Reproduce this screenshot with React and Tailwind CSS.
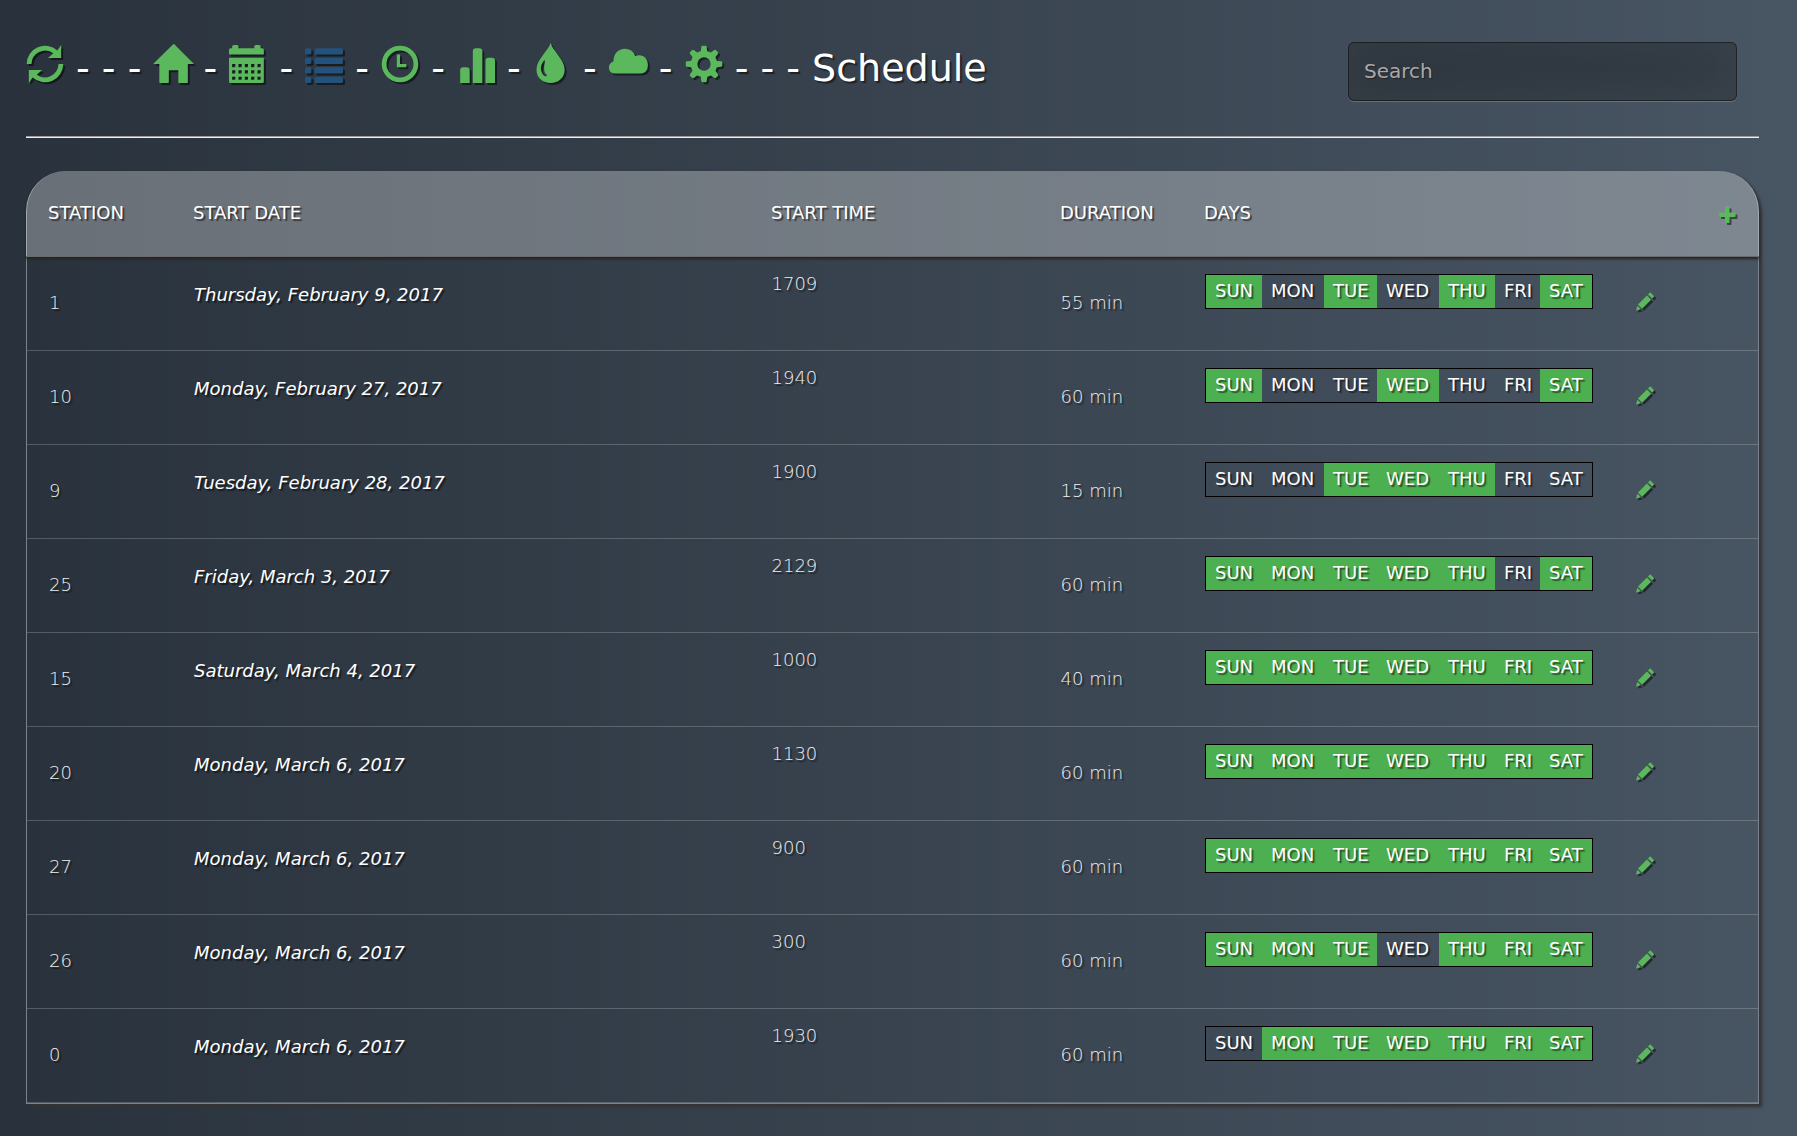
const cogTeeth = [0, 45, 90, 135, 180, 225, 270, 315];

const listRow = (y) => (
  <g key={y}>
    <rect x="0" y={y} width="200" height="200" rx="50" />
    <rect x="300" y={y} width="900" height="200" rx="50" />
  </g>
);

const holes = [];
for (const x of [100, 300, 500, 700, 900])
  for (const y of [500, 300, 100]) holes.push(`M${x} ${y}h100v100h-100z`);

const glyphs = {
  refresh: (
    <>
      <path d="M23 600A577 577 0 0 0 990 1025L1110 1200V790H695L860 940A435 435 0 0 1 173 600z" />
      <path d="M1177 600A577 577 0 0 0 210 175L90 0V410H505L340 260A435 435 0 0 1 1027 600z" />
    </>
  ),
  home: (
    <path d="M18 618l620 608q8 7 18.500 7t17.500 -7l608 -608q8 -8 5.500 -13t-12.500 -5h-175v-575q0 -10 -7.500 -17.500t-17.500 -7.500h-250q-10 0 -17.500 7.500t-7.500 17.500v375h-300v-375q0 -10 -7.500 -17.500t-17.500 -7.500h-250q-10 0 -17.500 7.500t-7.500 17.500v575h-175q-10 0 -12.500 5t5.500 13z" />
  ),
  calendar: (
    <>
      <path d="M0 900V1050Q0 1100 50 1100H100V1150Q100 1200 150 1200H250Q300 1200 300 1150V1100H800V1150Q800 1200 850 1200H950Q1000 1200 1000 1150V1100H1050Q1100 1100 1100 1050V900z" />
      <path fillRule="evenodd" d={"M0 800H1100V50Q1100 0 1050 0H50Q0 0 0 50z" + holes.join("")} />
    </>
  ),
  list: <>{[0, 300, 600, 900].map(listRow)}</>,
  clock: (
    <path fillRule="evenodd" d="M600 1177A577 577 0 1 0 600 23A577 577 0 1 0 600 1177zM600 1027A427 427 0 1 1 600 173A427 427 0 1 1 600 1027zM500 900h100v-300h200v-100h-300z" />
  ),
  stats: (
    <>
      <path d="M100 0V400Q100 500 200 500H300Q400 500 400 400V0z" />
      <path d="M500 0V1000Q500 1100 600 1100H700Q800 1100 800 1000V0z" />
      <path d="M900 0V700Q900 800 1000 800H1100Q1200 800 1200 700V0z" />
    </>
  ),
  tint: (
    <path fillRule="evenodd" d="M555 1275C590 1050 1000 760 1000 420C1000 170 800 0 555 0C305 0 110 170 110 420C110 760 515 1050 555 1275zM367 725C310 670 255 580 250 470C250 350 320 225 390 210C440 205 455 245 425 270C370 300 350 370 350 470C350 570 385 650 367 725z" />
  ),
  cloud: (
    <path d="M200 300H1000Q1100 300 1160 360Q1230 440 1230 580Q1230 690 1160 780Q1080 875 950 875Q890 875 830 845Q780 980 700 1030Q610 1085 500 1085Q350 1085 240 970Q140 860 145 690Q-10 610 -5 490Q0 300 200 300z" />
  ),
  cog: (
    <>
      <path fillRule="evenodd" d="M600 1015A415 415 0 1 0 600 185A415 415 0 1 0 600 1015zM600 810A210 210 0 1 1 600 390A210 210 0 1 1 600 810z" />
      {cogTeeth.map((a) => (
        <path key={a} transform={`rotate(${a} 600 600)`} d="M470 950Q510 1010 515 1140Q518 1175 550 1177H650Q682 1175 685 1140Q690 1010 730 950z" />
      ))}
    </>
  ),
  plus: (
    <path d="M450 1100H650Q700 1100 700 1050V700H1050Q1100 700 1100 650V450Q1100 400 1050 400H700V50Q700 0 650 0H450Q400 0 400 50V400H50Q0 400 0 450V650Q0 700 50 700H400V1050Q400 1100 450 1100z" />
  ),
  pencil: (
    <path d="M0 -30L90 290L330 50zM130 370L410 90L1010 690L730 970zM800 1035L1075 760L1185 870Q1220 905 1185 945L985 1145Q945 1180 910 1145z" />
  ),
};

function Glyph({ name, className }) {
  return (
    <svg viewBox="0 0 1200 1200" className={"shrink-0 overflow-visible drop-shadow-[2px_2px_0.6px_rgba(0,0,0,0.5)] " + className} fill="currentColor" aria-hidden="true">
      <g transform="matrix(1 0 0 -1 0 1200)">{glyphs[name]}</g>
    </svg>
  );
}

const nav = ["home", "calendar", "list", "clock", "stats", "tint", "cloud", "cog"];

const dayWidths = [
  ["SUN", "w-[56px]"],
  ["MON", "w-[62px]"],
  ["TUE", "w-[53px]"],
  ["WED", "w-[62px]"],
  ["THU", "w-[56px]"],
  ["FRI", "w-[45px]"],
  ["SAT", "w-[52px]"],
];

const rows = [
  ["1", "Thursday, February 9, 2017", "1709", "55 min", "1010101"],
  ["10", "Monday, February 27, 2017", "1940", "60 min", "1001001"],
  ["9", "Tuesday, February 28, 2017", "1900", "15 min", "0011100"],
  ["25", "Friday, March 3, 2017", "2129", "60 min", "1111101"],
  ["15", "Saturday, March 4, 2017", "1000", "40 min", "1111111"],
  ["20", "Monday, March 6, 2017", "1130", "60 min", "1111111"],
  ["27", "Monday, March 6, 2017", "900", "60 min", "1111111"],
  ["26", "Monday, March 6, 2017", "300", "60 min", "1110111"],
  ["0", "Monday, March 6, 2017", "1930", "60 min", "0111111"],
];

const light = "font-extralight text-[#eee]";

export default function App() {
  return (
    <div className="h-[1136px] w-[1797px] overflow-hidden bg-linear-to-r from-[#29323c] to-[#485563] pl-[26px] pr-[38px] font-['DejaVu_Sans',sans-serif] text-[18px] text-white [text-shadow:2px_2px_1px_rgba(0,0,0,0.5)]">
      <header className="flex h-[136px] items-start justify-between">
        <h1 className="mt-[45px] flex whitespace-pre text-[38px] leading-[46px]">
          <Glyph name="refresh" className="size-[38px] text-[#5cb85c]" />
          <span>{" - - - "}</span>
          {nav.map((n, i) => (
            <span key={n} className="flex">
              {i > 0 && <span>{" - "}</span>}
              <Glyph name={n} className={"size-[38px] " + (n === "list" ? "text-[#23527c]" : "text-[#5cb85c]")} />
            </span>
          ))}
          <span>{" - - - Schedule"}</span>
        </h1>
        <input
          placeholder="Search"
          className="mr-[22px] mt-[42px] h-[59px] w-[389px] rounded-[6px] border border-black/40 bg-black/30 px-[15px] pb-[2px] text-[20px] shadow-[inset_0_-5px_45px_rgba(100,100,100,0.2),0_1px_1px_rgba(255,255,255,0.2)] outline-none placeholder:text-[#a9a9a9] [text-shadow:1px_1px_1px_rgba(0,0,0,0.4)]"
        />
      </header>
      <div className="h-[2px] border-b border-t border-b-[#eee] border-t-[#9a9a9a]" />
      <section className="mt-[33px] h-[933px] rounded-t-[40px] border-x border-b border-[#7b828c] shadow-[3px_3px_3px_#333]">
        <div className="-mx-px grid h-[86px] grid-cols-[145px_578px_289px_144px_1fr] rounded-t-[40px] border-b border-[#6b6b6b] bg-white/30 bg-clip-padding pl-[22px] pt-[31px] leading-[21px] shadow-[0_2px_3px_#222]">
          <span>STATION</span>
          <span>START DATE</span>
          <span>START TIME</span>
          <span>DURATION</span>
          <div className="flex justify-between pr-[22px]">
            <span>DAYS</span>
            <Glyph name="plus" className="mt-[3px] size-[18px] text-[#5cb85c]" />
          </div>
        </div>
        {rows.map(([station, date, time, duration, days], r) => (
          <div key={r} className="grid h-[94px] grid-cols-[145px_577.5px_289px_144.5px_1fr] border-b border-white/20 pl-[22px] leading-[21px]">
            <span className={"mt-[35px] " + light}>{station}</span>
            <em className="mt-[27px]">{date}</em>
            <span className={"mt-[16px] " + light}>{time}</span>
            <span className={"mt-[35px] " + light}>{duration}</span>
            <div className="flex items-start">
              <div className="mt-[17px] flex h-[35px] border border-black">
                {dayWidths.map(([d, w], i) => (
                  <span key={d} className={"pl-[9px] pt-[5px] " + w + (days[i] === "1" ? " bg-[#4caf50]" : "")}>{d}</span>
                ))}
              </div>
              <Glyph name="pencil" className="ml-[43px] mt-[35px] size-[18px] text-[#5cb85c]" />
            </div>
          </div>
        ))}
      </section>
    </div>
  );
}
